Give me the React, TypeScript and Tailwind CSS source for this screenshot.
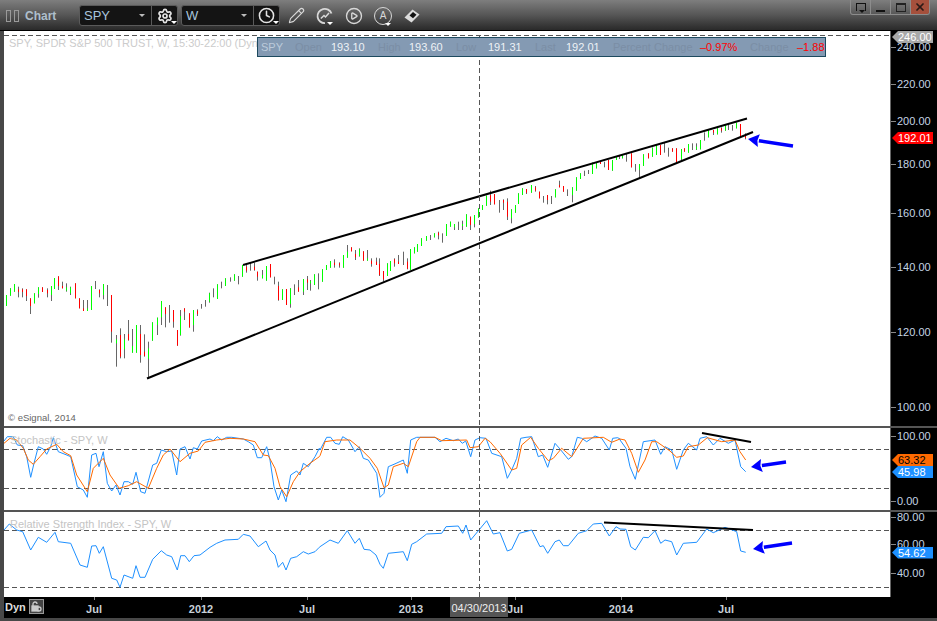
import type { ReactNode } from "react";
import { CirclePlay, Clock, Pencil, Settings, X } from "lucide-react";

// Everything below was read off 3x crops, so it is in crop units: [x, high, low, colour, bodyTop, bodyBottom]
type Bar = [number, number, number, string, number?, number?];

const barsA: Bar[] = [
  [18, 165, 198, "g"], [30, 145, 167, "g"], [42, 132, 155, "g"], [54, 140, 172, "r", 148, 156], [66, 145, 172, "r", 148, 156],
  [78, 148, 183, "r", 148, 168], [90, 175, 222, "r", 175, 198], [102, 160, 190, "g"], [114, 142, 173, "g", 142, 162], [126, 142, 156, "r"],
  [142, 145, 172, "r", 150, 160], [154, 138, 183, "g", 138, 165], [162, 114, 147, "g"], [175, 109, 150, "r", 109, 138], [187, 125, 145, "r", 138, 145],
  [199, 130, 155, "g", 142, 152], [211, 140, 165, "g", 142, 160], [226, 130, 175, "r"], [238, 175, 205, "r"], [250, 180, 213, "r", 205, 213],
  [262, 180, 213, "g", 205, 213], [274, 138, 210, "g"], [286, 123, 147, "k"], [298, 148, 172, "r", 150, 160], [310, 132, 178, "g", 132, 165],
  [322, 135, 198, "k"], [334, 165, 308, "r", 165, 275], [349, 285, 380, "g", 298, 310], [361, 265, 355, "r", 285, 350], [373, 282, 355, "g", 298, 328],
  [385, 240, 302, "r", 282, 300], [397, 267, 338, "g", 318, 338], [409, 255, 338, "g"], [421, 255, 368, "r", 282, 345], [433, 283, 350, "r", 335, 348],
  [445, 305, 415, "g", 325, 356], [457, 247, 302, "g"], [472, 233, 285, "g", 233, 255], [484, 183, 255, "g", 183, 232], [496, 202, 262, "r", 202, 222],
  [508, 195, 248, "k"], [520, 210, 263, "r", 210, 245], [532, 270, 317, "r"], [541, 210, 287, "g", 228, 285], [553, 205, 240, "r", 205, 215],
  [568, 220, 263, "r", 220, 262], [580, 210, 275, "g", 210, 255], [592, 208, 228, "r", 212, 222], [604, 192, 206, "k"], [616, 180, 200, "k"],
  [628, 158, 188, "g", 160, 185], [640, 145, 172, "k"], [652, 133, 177, "g"], [664, 125, 145, "k"], [676, 115, 138, "g"],
  [690, 112, 125, "k"], [702, 103, 122, "g"], [715, 108, 133, "k"], [727, 75, 110, "g"], [739, 75, 98, "r", 80, 92],
  [751, 68, 92, "k"], [763, 68, 92, "r", 80, 90], [772, 95, 122, "r", 95, 110], [787, 90, 115, "g", 105, 115], [799, 78, 122, "g"],
  [811, 72, 112, "r"], [823, 110, 133, "k"], [835, 125, 182, "r", 138, 180], [847, 148, 180, "g"], [859, 147, 195, "r"],
  [871, 145, 203, "g", 145, 192], [883, 133, 165, "k"], [895, 120, 155, "r", 142, 155],
];

const barsB: Bar[] = [
  [10, 387, 435, "g", 387, 425], [22, 378, 420, "r", 388, 398], [32, 390, 422, "g", 393, 400], [44, 373, 405, "g"], [55, 370, 418, "k"],
  [68, 358, 395, "g"], [80, 345, 360, "g"], [92, 333, 353, "g"], [104, 328, 353, "r", 338, 345], [118, 337, 353, "r", 340, 346],
  [130, 315, 353, "g"], [142, 285, 323, "g", 305, 323], [154, 292, 304, "r"], [166, 300, 330, "r", 312, 322], [178, 295, 320, "g", 298, 318],
  [190, 304, 332, "r"], [202, 300, 332, "g", 325, 332], [214, 325, 350, "r", 332, 342], [228, 323, 345, "r", 335, 345], [238, 325, 378, "r", 342, 375],
  [250, 363, 395, "r", 363, 388], [262, 340, 378, "g"], [272, 333, 363, "g"], [283, 325, 350, "r", 328, 340], [295, 315, 342, "r", 335, 342],
  [310, 305, 345, "k"], [322, 325, 358, "r", 335, 356], [331, 297, 360, "g"], [343, 292, 310, "g"], [353, 282, 305, "g"],
  [364, 265, 288, "g"], [379, 258, 272, "g"], [391, 255, 270, "k"], [403, 250, 262, "g"], [415, 245, 268, "r", 248, 256],
  [427, 250, 278, "k"], [439, 222, 258, "g"], [451, 215, 230, "g"], [463, 222, 240, "g", 222, 232], [475, 215, 240, "k"],
  [487, 212, 240, "g", 222, 228], [499, 193, 230, "g"], [511, 200, 240, "r", 200, 225], [523, 195, 232, "g", 195, 222], [535, 175, 203, "g"],
  [547, 165, 180, "g"], [559, 137, 167, "g"], [571, 122, 165, "r", 135, 155], [583, 132, 163, "r"], [598, 150, 188, "k"],
  [610, 148, 180, "r", 150, 158], [622, 145, 210, "r", 155, 200], [634, 178, 220, "g", 178, 205], [646, 165, 188, "g"], [656, 130, 162, "g"],
  [668, 115, 135, "g"], [680, 117, 132, "r", 117, 128], [694, 105, 128, "g"], [706, 108, 125, "r", 112, 122], [718, 125, 145, "r"],
  [730, 138, 158, "k"], [742, 135, 163, "r", 135, 150], [754, 138, 162, "k"], [766, 118, 142, "g"], [778, 92, 112, "r", 105, 112],
  [790, 108, 125, "r"], [802, 118, 138, "k"], [817, 112, 157, "g", 112, 135], [829, 82, 122, "g"], [841, 70, 87, "g"],
  [853, 62, 78, "k"], [865, 60, 72, "k"], [877, 38, 72, "g"], [889, 38, 55, "g"], [901, 35, 42, "r"],
  [912, 35, 52, "k"], [925, 30, 60, "r"], [937, 30, 62, "g"], [949, 18, 30, "g"], [958, 15, 27, "r", 15, 20],
  [967, 13, 25, "g"], [979, 10, 35, "k"], [994, 10, 52, "r"], [1006, 42, 65, "k"], [1018, 42, 85, "g", 42, 60],
];

const barsC: Bar[] = [
  [10, 163, 198, "g"], [25, 160, 175, "r"], [37, 143, 170, "g"], [49, 135, 165, "g"], [61, 135, 165, "r"],
  [73, 128, 158, "k"], [85, 143, 170, "k"], [97, 145, 155, "r"], [109, 145, 187, "r"], [124, 147, 180, "g", 147, 178],
  [133, 145, 155, "r"], [145, 132, 158, "g"], [157, 130, 150, "k"], [169, 130, 150, "g", 140, 148], [181, 120, 148, "g"],
  [193, 97, 122, "k"], [205, 90, 112, "g"], [220, 90, 105, "r", 90, 98], [232, 85, 103, "g"], [244, 82, 98, "r", 84, 92],
  [256, 72, 92, "g"], [266, 70, 90, "k"], [278, 75, 92, "k"], [289, 68, 85, "g"], [301, 72, 112, "r"], [317, 100, 118, "r", 108, 114],
];

const stochBlue = [
  [12, 48], [22, 35], [40, 35], [52, 60], [68, 62], [80, 95], [92, 157], [102, 115], [115, 65], [130, 72], [140, 88], [152, 65], [160, 38], [175, 80], [195, 88], [212, 95], [232, 185], [250, 195], [262, 217], [275, 90], [288, 85], [297, 125], [310, 80], [322, 175], [335, 198], [348, 180], [360, 210], [372, 170], [385, 170], [398, 178], [408, 142], [422, 200], [435, 205], [458, 120], [470, 115], [484, 75], [500, 80], [515, 78], [530, 150], [540, 72], [555, 65], [570, 102], [580, 68], [592, 72], [605, 48], [630, 42], [640, 47], [652, 35], [665, 45], [680, 37], [695, 37], [730, 42], [745, 50], [760, 60], [772, 98], [785, 98], [800, 65], [810, 105], [822, 185], [835, 225], [845, 195], [858, 230], [872, 150], [890, 138], [900, 150], [910, 115], [925, 125], [945, 95], [958, 70],
];
const stochBlue2 = [
  [0, 75], [20, 37], [32, 37], [45, 55], [58, 58], [68, 35], [85, 45], [105, 80], [118, 65], [130, 100], [145, 105], [170, 145], [180, 217], [192, 205], [205, 125], [222, 118], [250, 105], [262, 145], [272, 45], [290, 37], [345, 37], [360, 50], [378, 40], [400, 47], [415, 42], [427, 55], [437, 48], [452, 95], [465, 45], [480, 38], [498, 40], [515, 85], [545, 95], [562, 160], [575, 135], [590, 100], [602, 40], [618, 37], [635, 35], [655, 95], [668, 90], [683, 127], [705, 55], [720, 72], [745, 103], [755, 95], [772, 37], [785, 40], [800, 50], [825, 33], [845, 40], [868, 75], [878, 40], [893, 38], [900, 42],
];
const stochBlue3 = [
  [0, 45], [18, 70], [30, 125], [46, 163], [70, 50], [105, 45], [122, 88], [135, 65], [155, 75], [170, 133], [190, 75], [205, 55], [230, 75], [240, 40], [260, 35], [280, 60], [300, 40], [325, 55], [345, 45], [362, 125], [377, 140],
];
const stochOrange = [
  [12, 55], [30, 40], [50, 45], [70, 70], [85, 105], [100, 118], [120, 95], [140, 72], [170, 58], [190, 80], [212, 92], [230, 150], [262, 200], [280, 130], [310, 100], [330, 150], [358, 190], [385, 182], [410, 170], [445, 190], [470, 130], [490, 90], [510, 72], [540, 110], [570, 85], [595, 78], [615, 52], [650, 45], [690, 40], [730, 42], [765, 50], [790, 90], [805, 92], [825, 130], [840, 185], [860, 215], [880, 170], [900, 140], [930, 115], [958, 95],
];
const stochOrange2 = [
  [0, 92], [15, 50], [50, 45], [90, 45], [120, 70], [150, 100], [172, 130], [192, 188], [205, 180], [220, 125], [250, 115], [265, 125], [290, 50], [300, 37], [345, 37], [365, 47], [440, 45], [450, 68], [475, 65], [495, 40], [510, 50], [540, 85], [575, 135], [590, 130], [605, 60], [632, 37], [655, 70], [685, 107], [700, 100], [725, 70], [755, 95], [790, 40], [850, 37], [875, 52], [900, 42],
];
const stochOrange3 = [
  [0, 42], [15, 45], [35, 85], [55, 142], [75, 105], [95, 50], [110, 50], [150, 78], [170, 97], [190, 93], [205, 65], [235, 60], [262, 38], [305, 50], [345, 45], [360, 80], [377, 105],
];
const rsi1 = [
  [12, 315], [28, 297], [50, 315], [68, 320], [92, 375], [115, 337], [140, 352], [165, 322], [175, 350], [212, 355], [240, 420], [262, 427], [275, 363], [288, 362], [298, 385], [310, 365], [335, 460], [350, 465], [360, 487], [372, 450], [398, 460], [408, 422], [420, 457], [435, 457], [458, 403], [484, 377], [500, 390], [515, 395], [532, 435], [542, 392], [555, 392], [568, 410], [582, 392], [600, 390], [630, 367], [650, 355], [675, 345], [715, 343], [730, 328], [750, 333], [775, 365], [798, 348], [810, 375], [825, 390], [835, 427], [848, 412], [858, 435], [872, 400], [890, 395], [910, 380], [925, 387], [945, 380], [958, 367],
];
const rsi2 = [
  [0, 365], [30, 345], [55, 355], [82, 317], [105, 355], [118, 340], [132, 373], [150, 375], [168, 390], [180, 418], [190, 430], [205, 385], [250, 380], [262, 407], [275, 358], [290, 350], [320, 327], [365, 325], [378, 305], [415, 303], [428, 325], [438, 300], [452, 345], [500, 287], [520, 327], [540, 323], [562, 378], [575, 373], [598, 325], [635, 315], [660, 365], [670, 362], [683, 385], [705, 350], [718, 345], [730, 362], [745, 362], [775, 325], [800, 317], [820, 297], [845, 295], [868, 333], [888, 305], [900, 312],
];
const rsi3 = [
  [0, 312], [18, 313], [32, 365], [46, 375], [70, 337], [85, 338], [105, 317], [122, 355], [135, 345], [155, 350], [170, 390], [190, 355], [230, 352], [260, 312], [280, 323], [315, 307], [350, 320], [362, 378], [377, 382],
];

const toPoints = (...parts: [number, number[][]][]) =>
  parts
    .flatMap(([originX, pts]) => pts.map(([x, y]) => `${(originX + x / 3).toFixed(1)},${(425 + y / 3).toFixed(1)}`))
    .join(" ");

const colors: Record<string, string> = { g: "#00ff00", r: "#ff0000" };

function BarSet({ bars, ox, oy }: { bars: Bar[]; ox: number; oy: number }) {
  return (
    <>
      {bars.map(([zx, hi, lo, c, bt, bb]) => {
        const x = Math.floor(ox + zx / 3);
        const top = bt ?? hi;
        const bottom = bb ?? lo;
        return (
          <g key={zx}>
            <rect x={x} y={oy + hi / 3} width={1} height={(lo - hi) / 3} fill="#666666" />
            {c !== "k" && <rect x={x} y={oy + top / 3} width={1} height={(bottom - top) / 3} fill={colors[c]} />}
          </g>
        );
      })}
    </>
  );
}

function Arrow({ x1, y1, x2, y2 }: { x1: number; y1: number; x2: number; y2: number }) {
  const dx = x2 - x1;
  const dy = y2 - y1;
  const len = Math.hypot(dx, dy);
  const ux = dx / len;
  const uy = dy / len;
  const bx = x2 - ux * 11;
  const by = y2 - uy * 11;
  return (
    <g>
      <line x1={x1} y1={y1} x2={bx} y2={by} stroke="#0000ff" strokeWidth={3.5} />
      <polygon
        points={`${x2},${y2} ${bx - uy * 6.5},${by + ux * 6.5} ${bx + ux * 1.5},${by + uy * 1.5} ${bx + uy * 6.5},${by - ux * 6.5}`}
        fill="#0000ff"
      />
    </g>
  );
}

const Dash = ({ y }: { y: number }) => (
  <line x1={4} x2={891} y1={y} y2={y} stroke="#555555" strokeDasharray="5 3" />
);

const Trend = ({ x1, y1, x2, y2 }: { x1: number; y1: number; x2: number; y2: number }) => (
  <line x1={x1} y1={y1} x2={x2} y2={y2} stroke="#000000" strokeWidth={2} />
);

interface AxisLabel {
  text: string;
  y: number;
  tag?: "red" | "orange" | "blue" | "pale";
}

function AxisColumn({ top, labels }: { top: number; labels: AxisLabel[] }) {
  return (
    <div className="relative w-[46px] shrink-0 overflow-hidden bg-black text-[11px] text-[#c4d4e4]">
      {labels.map((l) => {
        if (!l.tag) {
          return (
            <div key={l.text} className="absolute left-0 flex items-center leading-[10px]" style={{ top: l.y - top - 5 }}>
              <span className="mr-[1px] h-px w-[5px] bg-[#888888]" />
              <span>{l.text}</span>
            </div>
          );
        }
        const tagClass = {
          red: "bg-[#ff0000] text-white",
          orange: "bg-[#ff6a00] text-black",
          blue: "bg-[#1e90ff] text-white",
          pale: "bg-[#a8a8a8] text-white",
        }[l.tag];
        return (
          <div
            key={l.text}
            className={`absolute left-px right-[4px] h-[12px] pl-[6px] leading-[12px] [clip-path:polygon(6px_0,100%_0,100%_100%,6px_100%,0_50%)] ${tagClass}`}
            style={{ top: l.y - top - 6 }}
          >
            {l.text}
          </div>
        );
      })}
    </div>
  );
}

function Panel({ top, height, children, overlay, labels }: { top: number; height: number; children: ReactNode; overlay?: ReactNode; labels: AxisLabel[] }) {
  return (
    <div className="flex" style={{ height }}>
      <div className="relative flex-1 overflow-hidden border-r border-[#666666] bg-white">
        <svg viewBox={`4 ${top} 887 ${height}`} width={887} height={height} className="block">
          {children}
          <line x1={479.5} x2={479.5} y1={Math.max(top, 36)} y2={top + height} stroke="#555555" strokeDasharray="5 3" />
        </svg>
        {overlay}
      </div>
      <AxisColumn top={top} labels={labels} />
    </div>
  );
}

const Separator = () => <div className="h-[2px] bg-[#555555]" />;

const Caret = () => (
  <span className="absolute bottom-[1px] right-0 h-0 w-0 border-x-[3px] border-t-[3px] border-x-transparent border-t-white" />
);

function Combo({ value, children }: { value: string; children: ReactNode }) {
  return (
    <div className="flex h-[21px] w-[99px] items-center rounded-[3px] border border-[#5a5a5a] bg-[#141414]">
      <span className="flex-1 pl-[4px] text-[13px] text-[#a8c4dc]">{value}</span>
      <span className="mr-[6px] h-0 w-0 border-x-[3px] border-t-[3px] border-x-transparent border-t-[#bbbbbb]" />
      <span className="relative flex h-full w-[26px] items-center justify-center border-l border-[#5a5a5a]">{children}</span>
    </div>
  );
}

const quoteCells: [string, number, string][] = [
  ["SPY", 34, "text-[#bccbdb]"],
  ["Open", 36, "text-[#7b8ea5]"],
  ["193.10", 47, "text-[#eef2f6]"],
  ["High", 31, "text-[#7b8ea5]"],
  ["193.60", 47, "text-[#eef2f6]"],
  ["Low", 32, "text-[#7b8ea5]"],
  ["191.31", 47, "text-[#eef2f6]"],
  ["Last", 31, "text-[#7b8ea5]"],
  ["192.01", 47, "text-[#eef2f6]"],
  ["Percent Change", 87, "text-[#7b8ea5]"],
  ["–0.97%", 50, "text-[#ff0000]"],
  ["Change", 47, "text-[#7b8ea5]"],
  ["–1.88", 28, "text-[#ff0000]"],
];

const xLabels = [
  { text: "Jul", x: 94 },
  { text: "2012", x: 201 },
  { text: "Jul", x: 307 },
  { text: "2013", x: 411 },
  { text: "Jul", x: 515 },
  { text: "2014", x: 621 },
  { text: "Jul", x: 726 },
];

export default function App() {
  return (
    <div className="flex h-[621px] w-[937px] flex-col overflow-hidden bg-[#484848] pb-[3px] font-['Liberation_Sans',Arial,sans-serif]">
      <header className="relative flex h-[31px] shrink-0 items-center border-b border-black bg-linear-to-b from-[#7e7e7e] via-[#565656] to-[#2a2a2a] pl-[6px] pt-[1px]">
        <span className="flex gap-[3px]">
          <span className="h-[12px] w-[5px] border border-[#9a9a9a]" />
          <span className="h-[12px] w-[5px] border border-[#9a9a9a]" />
        </span>
        <span className="ml-[6px] w-[54px] text-[12px] font-bold text-[#aebfcc]">Chart</span>
        <Combo value="SPY">
          <Settings size={16} strokeWidth={2.6} className="text-[#e4e4e4]" />
          <Caret />
        </Combo>
        <div className="ml-[3px]">
          <Combo value="W">
            <Clock size={17} strokeWidth={2.2} className="text-[#e4e4e4]" />
            <Caret />
          </Combo>
        </div>
        <div className="ml-[8px] flex items-center gap-[11px] text-[#d8d8d8]">
          <Pencil size={17} strokeWidth={1.6} />
          <span className="relative flex h-[18px] w-[18px] items-center justify-center">
            <svg width={18} height={18} viewBox="0 0 18 18" fill="none" stroke="currentColor">
              <path d="M15.5 6.5A7.2 7.2 0 1 0 9 16.2" strokeWidth={1.8} />
              <path d="M4.8 11.5 8 8.5l1.5 1.5 3.5-4" strokeWidth={1.5} />
            </svg>
            <span className="absolute bottom-0 right-[1px] h-0 w-0 border-x-[3px] border-t-[3px] border-x-transparent border-t-white" />
          </span>
          <CirclePlay size={18} strokeWidth={1.8} />
          <span className="relative flex h-[18px] w-[18px] items-center justify-center rounded-full border-[1.5px] border-[#d8d8d8] text-[10px] leading-none">
            A
            <span className="absolute -bottom-[2px] right-0 h-0 w-0 border-x-[3px] border-t-[3px] border-x-transparent border-t-white" />
          </span>
          <svg width={18} height={18} viewBox="0 0 18 18">
            <path d="M1.5 10.5 9.5 2.5l7 5-8 8z" fill="#dcdcdc" />
            <path d="M6.5 8.5 10 5l3.5 2.7L10 11.3z" fill="#111111" />
          </svg>
        </div>
        <div className="absolute right-[7px] top-0 flex h-[15px] w-[80px] overflow-hidden rounded-b-[3px] border border-t-0 border-[#8c8c8c]">
          <span className="flex w-[20px] items-center justify-center border-r border-[#8c8c8c]">
            <span className="relative h-[8px] w-[10px] border border-b-0 border-[#111111]">
              <span className="absolute -bottom-[2px] right-0 h-0 w-0 border-x-[3px] border-t-[3px] border-x-transparent border-t-[#111111]" />
            </span>
          </span>
          <span className="flex w-[20px] items-end justify-center border-r border-[#8c8c8c] pb-[2px]">
            <span className="h-[2px] w-[9px] bg-[#111111]" />
          </span>
          <span className="flex w-[20px] items-center justify-center border-r border-[#8c8c8c]">
            <span className="h-[9px] w-[10px] border border-t-2 border-[#222222]" />
          </span>
          <span className="flex flex-1 items-center justify-center bg-[#a5503c]">
            <X size={12} strokeWidth={3.5} className="text-[#2a1a16]" />
          </span>
        </div>
      </header>

      <div className="flex flex-1 flex-col pl-[4px]">
        <Panel
          top={31}
          height={395}
          labels={[
            { text: "240.00", y: 47 },
            { text: "220.00", y: 84 },
            { text: "200.00", y: 121 },
            { text: "180.00", y: 164 },
            { text: "160.00", y: 213 },
            { text: "140.00", y: 267 },
            { text: "120.00", y: 332 },
            { text: "100.00", y: 407 },
            { text: "246.00", y: 37, tag: "pale" },
            { text: "192.01", y: 138, tag: "red" },
          ]}
          overlay={
            <>
              <div className="absolute left-[5px] top-[5px] text-[11px] leading-[14px] whitespace-nowrap text-[#cccccc]">
                SPY, SPDR S&amp;P 500 TRUST, W, 15:30-22:00 (Dynamic)
              </div>
              <div className="absolute left-[253px] top-[6px] flex h-[20px] w-[569px] items-center border border-[#1d4a5f] bg-[#849ab3] pl-[3px] text-[11px] whitespace-nowrap">
                {quoteCells.map(([text, w, cls]) => (
                  <span key={text} className={`shrink-0 ${cls}`} style={{ width: w }}>
                    {text}
                  </span>
                ))}
              </div>
              <div className="absolute bottom-[2px] left-[4px] text-[9.5px] leading-[12px] text-[#666666]">© eSignal, 2014</div>
            </>
          }
        >
          <Dash y={35.5} />
          <BarSet bars={barsA} ox={0} oy={240} />
          <BarSet bars={barsB} ox={300} oy={150} />
          <BarSet bars={barsC} ox={640} oy={100} />
          <Trend x1={243} y1={265} x2={747} y2={118.5} />
          <Trend x1={147} y1={378.5} x2={753} y2={132} />
          <Arrow x1={793} y1={146} x2={748} y2={139} />
        </Panel>
        <Separator />
        <Panel
          top={428}
          height={82}
          labels={[
            { text: "100.00", y: 436 },
            { text: "0.00", y: 501 },
            { text: "63.32", y: 460, tag: "orange" },
            { text: "45.98", y: 472, tag: "blue" },
          ]}
          overlay={
            <div className="absolute left-[6px] top-[5px] text-[11px] leading-[14px] text-[#c4c4c4]">Stochastic - SPY, W</div>
          }
        >
          <Dash y={449.5} />
          <Dash y={488.5} />
          <polyline fill="none" stroke="#1e90ff" strokeWidth={1} points={toPoints([0, stochBlue], [320, stochBlue2], [620, stochBlue3])} />
          <polyline fill="none" stroke="#ff6a00" strokeWidth={1} points={toPoints([0, stochOrange], [320, stochOrange2], [620, stochOrange3])} />
          <Trend x1={702} y1={433} x2={751} y2={442} />
          <Arrow x1={786} y1={462} x2={751} y2={467} />
        </Panel>
        <Separator />
        <Panel
          top={512}
          height={85}
          labels={[
            { text: "80.00", y: 517 },
            { text: "60.00", y: 544 },
            { text: "40.00", y: 573 },
            { text: "54.62", y: 552.5, tag: "blue" },
          ]}
          overlay={
            <div className="absolute left-[6px] top-[5px] text-[11px] leading-[14px] text-[#c4c4c4]">Relative Strength Index - SPY, W</div>
          }
        >
          <Dash y={530.5} />
          <Dash y={587.5} />
          <polyline fill="none" stroke="#1e90ff" strokeWidth={1} points={toPoints([0, rsi1], [320, rsi2], [620, rsi3])} />
          <Trend x1={604} y1={522.5} x2={753} y2={530} />
          <Arrow x1={792} y1={543} x2={753} y2={549} />
        </Panel>

        <div className="relative h-[21px] shrink-0 bg-black text-[11px] font-bold text-[#c8d0d8]">
          <span className="absolute left-[1px] top-[2px] text-[#dddddd]">Dyn</span>
          <span className="absolute left-[25px] top-[2px] flex h-[15px] w-[15px] items-center justify-center border border-[#999999] bg-[#444444]">
            <svg width={11} height={11} viewBox="0 0 11 11" fill="none" stroke="#cccccc" strokeWidth={1.3}>
              <path d="M2 5V3a2 2 0 0 1 4 0" />
              <rect x={1} y={5} width={6} height={5} fill="#cccccc" />
              <circle cx={8} cy={8} r={2} />
            </svg>
          </span>
          {xLabels.map((l) => (
            <span key={l.x}>
              <span className="absolute top-0 h-[3px] w-px bg-[#888888]" style={{ left: l.x - 4 }} />
              <span className="absolute top-[4px] -translate-x-1/2" style={{ left: l.x - 4 }}>
                {l.text}
              </span>
            </span>
          ))}
          <span className="absolute left-[446px] top-0 h-[20px] w-[58px] bg-[#555555] pt-[3px] text-center text-[11px] font-normal whitespace-nowrap text-[#eeeeee]">
            04/30/2013
          </span>
        </div>
      </div>
    </div>
  );
}
